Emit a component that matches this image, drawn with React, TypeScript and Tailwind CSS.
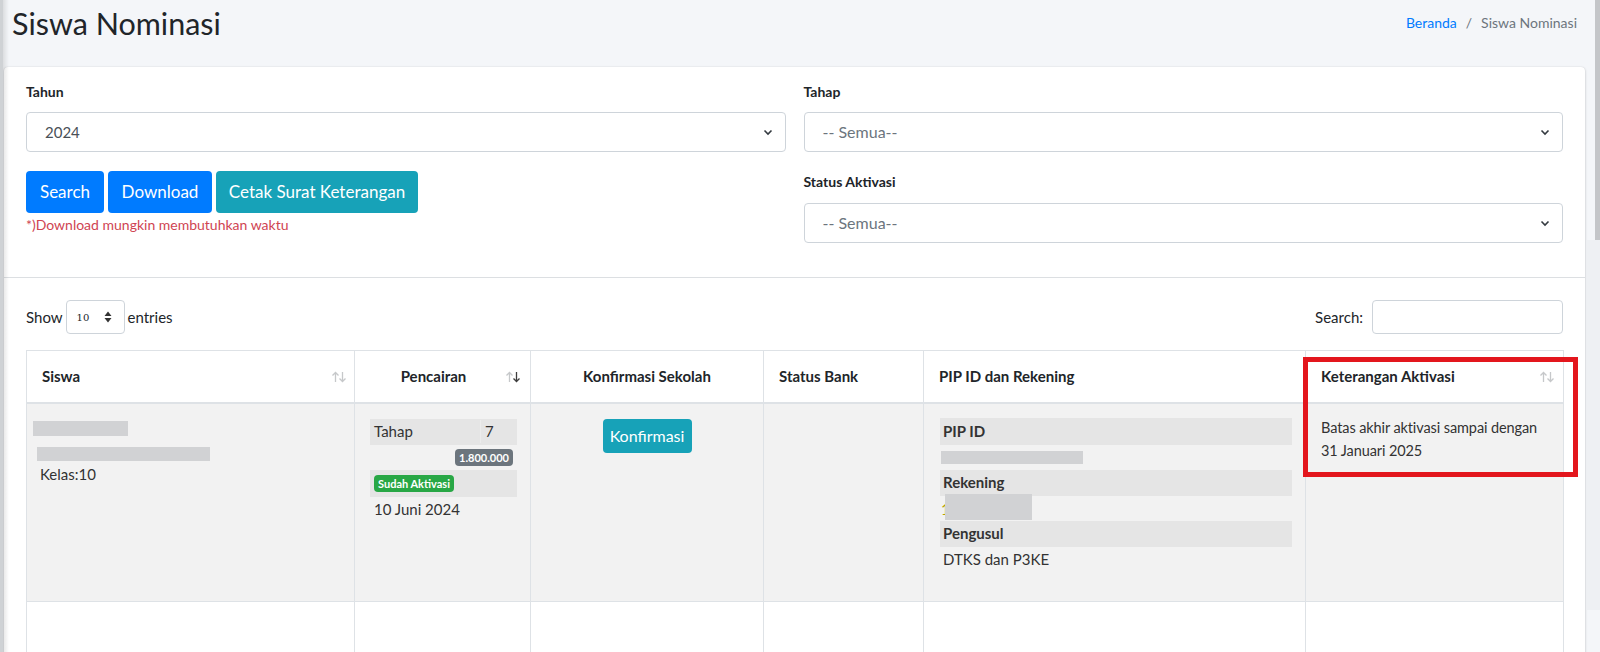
import React from 'react';

const Chevron: React.FC = () => (
  <svg width="10" height="7" viewBox="0 0 10 7" className="shrink-0">
    <path d="M1.5 1.5 5 5l3.5-3.5" fill="none" stroke="#343a40" strokeWidth="1.6" />
  </svg>
);

const SortIcon: React.FC<{ active?: boolean }> = ({ active }) => (
  <svg width="16" height="12" viewBox="0 0 16 12">
    <path d="M4.5 11V1.5M1.5 4.5l3-3 3 3" fill="none" stroke="#c6c8ca" strokeWidth="1.3" />
    <path d="M11.5 1v9.5M8.5 7.5l3 3 3-3" fill="none" stroke={active ? '#3d3d3d' : '#c6c8ca'} strokeWidth="1.3" />
  </svg>
);

const SelectBox: React.FC<{ value: string; muted?: boolean }> = ({ value, muted }) => (
  <div className="flex h-[40px] items-center justify-between rounded-[4px] border border-[#ced4da] bg-white pl-[18px] pr-[12px]">
    <span className={muted ? 'text-[16px] text-[#6c757d]' : 'text-[15px] text-[#495057]'}>{value}</span>
    <Chevron />
  </div>
);

const Redacted: React.FC<{ className: string }> = ({ className }) => (
  <div className={`bg-[#d1d2d4] ${className}`} />
);

const App: React.FC = () => {
  return (
    <div className="relative h-[652px] w-[1600px] overflow-hidden bg-[#f4f6f9] font-['Lato',sans-serif] text-[#212529]">
      {/* sidebar edge */}
      <div className="absolute left-0 top-0 z-10 h-full w-[3px] bg-[#cfd2d5]" />
      <div className="absolute left-[3px] top-0 z-10 h-full w-[6px] bg-gradient-to-r from-black/10 to-transparent" />
      {/* scrollbar */}
      <div className="absolute right-0 top-[240px] h-[370px] w-[13px] bg-[#eef0f3]" />
      <div className="absolute right-0 top-0 h-[240px] w-[5px] bg-[#c4c6c9]" />

      <div className="flex h-[67px] items-start justify-between pl-[12px] pr-[23px] pt-[4px]">
        <h1 className="text-[30.5px] leading-[38px] text-[#212529]">Siswa Nominasi</h1>
        <nav className="flex items-center gap-[9px] pt-[9px] text-[14px] leading-[20px]">
          <span className="text-[#007bff]">Beranda</span>
          <span className="text-[#6c757d]">/</span>
          <span className="text-[#6c757d]">Siswa Nominasi</span>
        </nav>
      </div>

      <div className="ml-[4px] w-[1581px] rounded-[4px] bg-white shadow-[0_0_1px_rgba(0,0,0,0.125),0_1px_3px_rgba(0,0,0,0.2)]">
        {/* filters */}
        <div className="grid grid-cols-2 gap-x-[18px] border-b border-[#dcdfe2] px-[22px] pb-[34px] pt-[15px]">
          <div>
            <label className="block text-[14px] font-bold leading-[20px]">Tahun</label>
            <div className="mt-[10px]">
              <SelectBox value="2024" />
            </div>
            <div className="mt-[19px] flex gap-[4px]">
              <button className="h-[42px] w-[78px] rounded-[4px] bg-[#007bff] text-[17px] text-white">Search</button>
              <button className="h-[42px] w-[104px] rounded-[4px] bg-[#007bff] text-[17px] text-white">Download</button>
              <button className="h-[42px] w-[202px] rounded-[4px] bg-[#17a2b8] text-[17px] text-white">Cetak Surat Keterangan</button>
            </div>
            <p className="mt-[3px] text-[14px] leading-[18px] text-[#cf4452]">*)Download mungkin membutuhkan waktu</p>
          </div>
          <div>
            <label className="block text-[14px] font-bold leading-[20px]">Tahap</label>
            <div className="mt-[10px]">
              <SelectBox value="-- Semua--" muted />
            </div>
            <label className="mt-[20px] block text-[14px] font-bold leading-[20px]">Status Aktivasi</label>
            <div className="mt-[11px]">
              <SelectBox value="-- Semua--" muted />
            </div>
          </div>
        </div>

        {/* table */}
        <div className="px-[22px] pt-[22px]">
          <div className="flex h-[34px] items-center justify-between text-[15px]">
            <div className="flex items-center">
              <span>Show</span>
              <div className="ml-[3px] flex h-[34px] w-[59px] items-center justify-between rounded-[4px] border border-[#ced4da] pl-[10px] pr-[12px]">
                <span className="font-['DejaVu_Serif',serif] text-[10px]">10</span>
                <svg width="8" height="12" viewBox="0 0 8 12">
                  <path d="M4 0.5 7.5 5h-7zM4 11.5 0.5 7h7z" fill="#333" />
                </svg>
              </div>
              <span className="ml-[3px]">entries</span>
            </div>
            <div className="flex items-center gap-[9px]">
              <span>Search:</span>
              <div className="h-[34px] w-[191px] rounded-[4px] border border-[#ced4da]" />
            </div>
          </div>

          <table className="mt-[16px] w-[1537px] table-fixed border-collapse border border-[#dee2e6] text-[15px]">
            <colgroup>
              <col className="w-[328px]" />
              <col className="w-[176px]" />
              <col className="w-[233px]" />
              <col className="w-[160px]" />
              <col className="w-[382px]" />
              <col className="w-[258px]" />
            </colgroup>
            <thead>
              <tr className="h-[52px] border-b-2 border-[#dee2e6] font-bold">
                <th className="relative border-r border-[#dee2e6] px-[15px] text-left">
                  Siswa
                  <span className="absolute right-[7px] top-[20px]"><SortIcon /></span>
                </th>
                <th className="relative border-r border-[#dee2e6] pl-[15px] pr-[33px] text-center">
                  Pencairan
                  <span className="absolute right-[9px] top-[20px]"><SortIcon active /></span>
                </th>
                <th className="border-r border-[#dee2e6] px-[15px] text-center">Konfirmasi Sekolah</th>
                <th className="border-r border-[#dee2e6] px-[15px] text-left">Status Bank</th>
                <th className="border-r border-[#dee2e6] px-[15px] text-left">PIP ID dan Rekening</th>
                <th className="relative px-[15px] text-left">
                  Keterangan Aktivasi
                  <span className="absolute right-[8px] top-[20px]"><SortIcon /></span>
                </th>
              </tr>
            </thead>
            <tbody>
              <tr className="h-[199px] bg-[#f2f2f2] align-top">
                <td className="border-r border-[#dee2e6] pl-[6px] pt-[17px]">
                  <Redacted className="h-[15px] w-[95px]" />
                  <Redacted className="ml-[4px] mt-[11px] h-[14px] w-[173px]" />
                  <div className="ml-[7px] mt-[2px] text-[15px] leading-[22px] text-[#333]">Kelas:10</div>
                </td>
                <td className="border-r border-[#dee2e6] pl-[15px] pt-[15px]">
                  <div className="w-[147px] text-[15px] text-[#333]">
                    <div className="flex h-[26px] items-center bg-[#e5e5e5]">
                      <span className="w-[111px] border-r border-[#ececec] pl-[4px]">Tahap</span>
                      <span className="pl-[4px]">7</span>
                    </div>
                    <div className="flex h-[25px] items-center justify-end pr-[4px]">
                      <span className="rounded-[4px] bg-[#6c757d] px-[4px] text-[11px] font-bold leading-[17px] text-white">1.800.000</span>
                    </div>
                    <div className="flex h-[27px] items-center bg-[#e5e5e5] pl-[4px]">
                      <span className="rounded-[4px] bg-[#28a745] px-[4px] text-[11px] font-bold leading-[17px] text-white">Sudah Aktivasi</span>
                    </div>
                    <div className="pl-[4px] pt-[1px] leading-[22px]">10 Juni 2024</div>
                  </div>
                </td>
                <td className="border-r border-[#dee2e6] pt-[15px] text-center">
                  <button className="h-[34px] w-[89px] rounded-[4px] bg-[#17a2b8] text-[16px] text-white">Konfirmasi</button>
                </td>
                <td className="border-r border-[#dee2e6]" />
                <td className="border-r border-[#dee2e6] pl-[16px] pr-[13px] pt-[14px]">
                  <div className="text-[15px] text-[#333]">
                    <div className="flex h-[27px] items-center bg-[#e5e5e5] pl-[3px] font-bold">PIP ID</div>
                    <div className="flex h-[25px] items-center pl-[1px]">
                      <Redacted className="h-[13px] w-[142px]" />
                    </div>
                    <div className="flex h-[26px] items-center bg-[#e5e5e5] pl-[3px] font-bold">Rekening</div>
                    <div className="relative h-[25px]">
                      <span className="absolute left-[1px] top-[2px] text-[#b5a300]">1</span>
                      <Redacted className="absolute left-[5px] top-[-2px] h-[26px] w-[87px]" />
                    </div>
                    <div className="flex h-[26px] items-center bg-[#e5e5e5] pl-[3px] font-bold">Pengusul</div>
                    <div className="pl-[3px] pt-[1px] leading-[22px]">DTKS dan P3KE</div>
                  </div>
                </td>
                <td className="pl-[15px] pr-[6px] pt-[12px] text-[14.5px] leading-[23px] tracking-[-0.1px] text-[#333]">
                  Batas akhir aktivasi sampai dengan
                  <br />
                  31 Januari 2025
                </td>
              </tr>
              <tr className="h-[60px] border-t border-[#dee2e6] bg-white">
                <td className="border-r border-[#dee2e6]" />
                <td className="border-r border-[#dee2e6]" />
                <td className="border-r border-[#dee2e6]" />
                <td className="border-r border-[#dee2e6]" />
                <td className="border-r border-[#dee2e6]" />
                <td />
              </tr>
            </tbody>
          </table>
        </div>
      </div>

      {/* annotation */}
      <div className="absolute left-[1303px] top-[357px] h-[120px] w-[275px] border-[5px] border-[#e3161d]" />
    </div>
  );
};

export default App;
